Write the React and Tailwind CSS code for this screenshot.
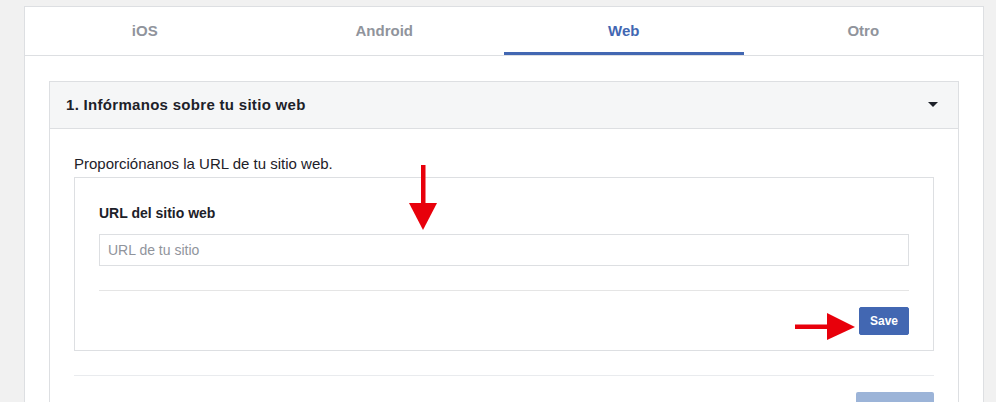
export default function App() {
  const tabs = ["iOS", "Android", "Web", "Otro"];

  return (
    <div
      className="relative min-h-screen bg-[#f1f1f1] pt-[6px] overflow-hidden"
      style={{ fontFamily: '"Liberation Sans", Arial, sans-serif' }}
    >
      <div className="ml-[24px] w-[960px] h-[400px] border border-[#dddfe2] bg-white">
        <nav className="grid grid-cols-4 h-[49px] border-b border-[#dddfe2]">
          {tabs.map((t) => (
            <div
              key={t}
              className={
                t === "Web"
                  ? "flex items-center justify-center text-[15px] font-bold text-[#4267b2] border-b-[3px] border-[#4267b2] pt-[3px]"
                  : "flex items-center justify-center text-[15px] font-bold text-[#90949c]"
              }
            >
              {t}
            </div>
          ))}
        </nav>

        <div className="pt-[25px] pl-[24px] pr-[24px]">
          <section className="border border-[#dddfe2] h-[400px]">
            <header className="flex items-center justify-between h-[47px] px-[16px] bg-[#f5f6f7] border-b border-[#dddfe2]">
              <h2 className="text-[15px] tracking-[0.3px] font-bold text-[#1d2129]">
                1. Infórmanos sobre tu sitio web
              </h2>
              <svg width="10" height="6" viewBox="0 0 10 6" className="mr-[4px]">
                <path d="M0 0h10L5 5z" fill="#1d2129" />
              </svg>
            </header>

            <div className="px-[24px] pt-[26px]">
              <p className="text-[15px] leading-[18px] text-[#1d2129]">
                Proporciónanos la URL de tu sitio web.
              </p>
              <div className="mt-[4px] border border-[#dddfe2] px-[24px] pt-[26px] pb-[15px]">
                <label className="block text-[14px] leading-[18px] font-bold text-[#1d2129]">
                  URL del sitio web
                </label>
                <input
                  placeholder="URL de tu sitio"
                  className="mt-[12px] w-full h-[32px] border border-[#dddfe2] px-[8px] text-[14px] text-[#1d2129] placeholder:text-[#90949c] outline-none"
                />
                <div className="mt-[24px] border-t border-[#e5e5e5]" />
                <div className="flex justify-end pt-[16px]">
                  <button className="h-[28px] w-[50px] rounded-[2px] bg-[#4267b2] border border-[#4267b2] text-white text-[12px] font-bold">
                    Save
                  </button>
                </div>
              </div>
              <div className="mt-[24px] border-t border-[#e9ebee]" />
              <div className="flex justify-end pt-[16px]">
                <div className="h-[28px] w-[78px] rounded-[2px] bg-[#9cb4d8]" />
              </div>
            </div>
          </section>
        </div>
      </div>

      <svg className="absolute left-[409px] top-[165px]" width="28" height="66" viewBox="0 0 28 66">
        <rect x="12" y="0" width="4.5" height="40" fill="#e8000b" />
        <path d="M0 38H28L14 65Z" fill="#e8000b" />
      </svg>
      <svg className="absolute left-[795px] top-[313px]" width="60" height="28" viewBox="0 0 60 28">
        <rect x="0" y="11.5" width="34" height="4.5" fill="#e8000b" />
        <path d="M32 0L60 14L32 27Z" fill="#e8000b" />
      </svg>
    </div>
  );
}
